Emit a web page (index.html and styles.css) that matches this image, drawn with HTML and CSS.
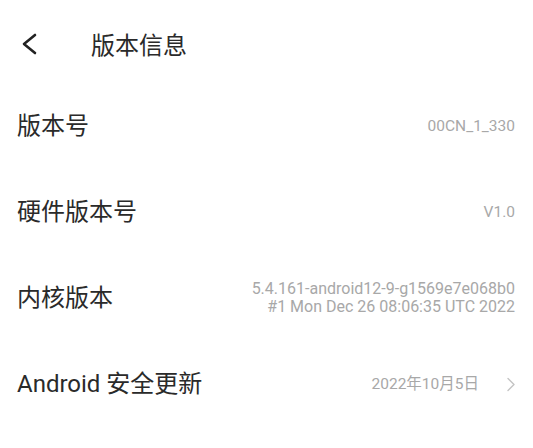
FILE: index.html
```html
<!DOCTYPE html>
<html lang="zh-CN">
<head>
<meta charset="utf-8">
<title>版本信息</title>
<link rel="stylesheet" href="styles.css">
</head>
<body>
<div class="page">
  <header class="header">
    <svg class="back" width="16" height="22" viewBox="0 0 16 22" aria-hidden="true">
      <polyline points="13,2 2,11 13,20" fill="none" stroke="#222" stroke-width="2.6" stroke-linecap="round" stroke-linejoin="round"/>
    </svg>
    <h1 class="title">版本信息</h1>
  </header>
  <div class="row">
    <span class="label">版本号</span>
    <span class="value">00CN_1_330</span>
  </div>
  <div class="row">
    <span class="label">硬件版本号</span>
    <span class="value">V1.0</span>
  </div>
  <div class="row">
    <span class="label">内核版本</span>
    <span class="value multi"><span class="line">5.4.161-android12-9-g1569e7e068b0</span><span class="line">#1 Mon Dec 26 08:06:35 UTC 2022</span></span>
  </div>
  <div class="row">
    <span class="label">Android 安全更新</span>
    <span class="right">
      <span class="value">2022年10月5日</span>
      <svg class="chev" width="10" height="15" viewBox="0 0 10 15" aria-hidden="true">
        <polyline points="2,1.5 8,7.5 2,13.5" fill="none" stroke="#c4c4c4" stroke-width="1.4" stroke-linecap="round" stroke-linejoin="round"/>
      </svg>
    </span>
  </div>
</div>
</body>
</html>
```
FILE: styles.css
```css
html, body {
  margin: 0;
  padding: 0;
  background: #ffffff;
}
body {
  font-family: Roboto, "Noto Sans CJK SC", "Noto Sans", sans-serif;
  color: #262626;
}
.page {
  width: 533px;
}
.header {
  box-sizing: border-box;
  height: 83px;
  padding: 4px 0 0 22px;
  display: flex;
  align-items: center;
}
.back {
  display: block;
  flex: none;
}
.title {
  margin: 0 0 0 53px;
  font-size: 24px;
  font-weight: 400;
  color: #2a2a2a;
  font-family: "Noto Sans CJK SC", sans-serif;
  line-height: 1;
}
.row {
  box-sizing: border-box;
  height: 86px;
  padding: 0 18px 0 17px;
  display: flex;
  align-items: center;
  justify-content: space-between;
}
.label {
  font-size: 24px;
  line-height: 1;
  color: #2a2a2a;
}
.value {
  font-size: 15.5px;
  color: #a8a8a8;
  line-height: 18px;
  text-align: right;
}
.multi {
  font-size: 16px;
  display: flex;
  flex-direction: column;
  align-items: flex-end;
}
.line {
  display: block;
  line-height: 18px;
}
.right {
  display: flex;
  align-items: center;
  gap: 27px;
}
.chev {
  display: block;
  margin-right: -1px;
}
```
